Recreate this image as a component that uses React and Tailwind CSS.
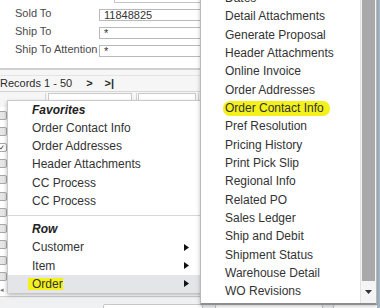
import React from "react";

const rightItems = [
  "Dates",
  "Detail Attachments",
  "Generate Proposal",
  "Header Attachments",
  "Online Invoice",
  "Order Addresses",
  "Order Contact Info",
  "Pref Resolution",
  "Pricing History",
  "Print Pick Slip",
  "Regional Info",
  "Related PO",
  "Sales Ledger",
  "Ship and Debit",
  "Shipment Status",
  "Warehouse Detail",
  "WO Revisions",
];

const favorites = ["Order Contact Info", "Order Addresses", "Header Attachments", "CC Process", "CC Process"];

// rows of the order grid, only the checkbox column shows past the menus
const gridRows = [0, 1, 2, 3, 4, 5, 6, 7, 8, 9, 10];

function Arrow() {
  return (
    <svg width="5" height="7" viewBox="0 0 5 7" className="absolute left-[176px]">
      <polygon points="0,0 5,3.5 0,7" fill="#111" />
    </svg>
  );
}

function FormRow({ label, value }) {
  return (
    <div className="flex items-center h-[18px]">
      <span className="w-[99px] pl-[15px] pb-[3px] text-[11px] text-[#4a4a4a]">{label}</span>
      <div className="w-[260px] h-[12px] border border-[#b9b9b9] bg-white pl-[4px] text-[11px] leading-[10px] text-[#333]">
        {value}
      </div>
    </div>
  );
}

export default function App() {
  return (
    <div
      className="relative w-[380px] h-[308px] overflow-hidden bg-white text-[#333]"
      style={{ fontFamily: '"Liberation Sans", Arial, sans-serif' }}
    >
      {/* header form */}
      <div className="h-[68px]">
        <div className="ml-[114px] w-[260px] h-[3px] border border-t-0 border-[#c5c5c5]" />
        <div className="mt-[3px]">
          <FormRow label="Sold To" value="11848825" />
          <FormRow label="Ship To" value="*" />
          <FormRow label="Ship To Attention" value="*" />
        </div>
      </div>

      {/* toolbar */}
      <div className="h-[8px] border-t-2 border-[#d0d0d0] bg-[#f6f6f6] border-b border-b-[#e4e4e4]" />
      <div className="h-[15px] bg-[#f6f6f6] flex items-center text-[11px] text-[#2a2a2a]">
        <span>Records 1 - 50</span>
        <span className="ml-[14px] font-bold">&gt;</span>
        <span className="ml-[12px] font-bold">&gt;|</span>
      </div>

      {/* grid */}
      <div className="border-t border-[#d5d5d5] bg-[#f6f6f6] flex h-[16px] pt-[1px]">
        <div className="w-[46px] border-r border-[#d5d5d5]" />
        <div className="ml-[2px] w-[84px] h-[14px] border border-[#c9c9c9] bg-white" />
        <div className="ml-[4px] w-[2px] border-l border-[#d5d5d5]" />
        <div className="w-[58px] h-[14px] border border-[#c9c9c9] bg-white" />
        <div className="ml-[2px] border-l border-[#d5d5d5] flex-1" />
      </div>
      <div className="bg-white">
        {gridRows.map((i) => (
          <div key={i} className="flex items-center h-[16.2px]">
            <div
              className={`-ml-[4px] w-[11px] h-[9px] rounded-[2px] border border-[#a9a9a9] flex items-center justify-end pr-[1px] text-[7px] leading-none ${
                i === 2 ? "bg-white text-[#222]" : "bg-[#e6e6e6]"
              }`}
            >
              {i === 2 ? "✓" : ""}
            </div>
          </div>
        ))}
        <div className="h-[12px] flex items-center text-[7px] text-[#777] border-b border-[#cfcfcf]">◂</div>
      </div>
      <div className="h-[20px] bg-[#f0f1f3] relative">
        <div className="absolute left-[103px] top-[7px] w-[100px] h-[16px] border border-[#c6c6c6] rounded-[2px] bg-white" />
        <div className="absolute left-[215px] top-[7px] w-[108px] h-[16px] border border-[#c6c6c6] rounded-[2px] bg-white" />
        <div className="absolute left-[333px] top-[7px] w-[60px] h-[16px] border border-[#c6c6c6] rounded-[2px] bg-white" />
      </div>

      {/* right edge strip */}
      <div className="absolute right-0 top-0 w-[3px] h-[308px] bg-[#a9b8c6]" />

      {/* context menu */}
      <div className="absolute left-[7px] top-[100px] w-[200px] h-[193px] bg-white border border-[#cacaca] shadow-[0_2px_4px_rgba(0,0,0,0.3)] text-[12px] text-[#333]">
        <div className="h-[18px] flex items-center pl-[24px] italic font-bold text-[#222]">Favorites</div>
        {favorites.map((f, i) => (
          <div key={i} className="h-[18.2px] flex items-center pl-[24px]">
            {f}
          </div>
        ))}
        <div className="mt-[5px] mb-[4px] border-t border-[#d6d6d6]" />
        <div className="h-[18.3px] flex items-center pl-[24px] italic font-bold text-[#222]">Row</div>
        <div className="relative h-[18.3px] flex items-center pl-[24px]">
          Customer
          <Arrow />
        </div>
        <div className="relative h-[18.3px] flex items-center pl-[24px]">
          Item
          <Arrow />
        </div>
        <div className="relative h-[18.3px] flex items-center pl-[20px] bg-[#e3e5e8]">
          <span className="bg-[#f3f01a] pl-[4px] h-[12px] leading-[12px]">Order</span>
          <Arrow />
        </div>
      </div>

      {/* submenu */}
      <div className="absolute left-[200px] top-[-12px] w-[177px] h-[317px] bg-white border border-[#b9b9b9] border-b-2 border-b-[#8e8e8e] shadow-[0_1px_4px_rgba(0,0,0,0.25)] flex text-[12px] text-[#333]">
        <div className="w-[160px] border-r border-[#e2e2e2]">
          {rightItems.map((t) =>
            t === "Order Contact Info" ? (
              <div key={t} className="h-[18.33px] flex items-center pl-[22px]">
                <span className="bg-[#f3f01a] rounded-[7px] h-[15px] leading-[15px] pl-[2px] pr-[6px]">{t}</span>
              </div>
            ) : (
              <div key={t} className="h-[18.33px] flex items-center pl-[24px]">
                {t}
              </div>
            )
          )}
        </div>
        <div className="flex-1 flex flex-col bg-[#f4f4f4]">
          <div className="mx-[1px] h-[292px] bg-[#a9a9a9]" />
          <div className="flex-1 flex items-center justify-center">
            <svg width="7" height="4" viewBox="0 0 7 4">
              <polygon points="0,0 7,0 3.5,4" fill="#333" />
            </svg>
          </div>
        </div>
      </div>
    </div>
  );
}
